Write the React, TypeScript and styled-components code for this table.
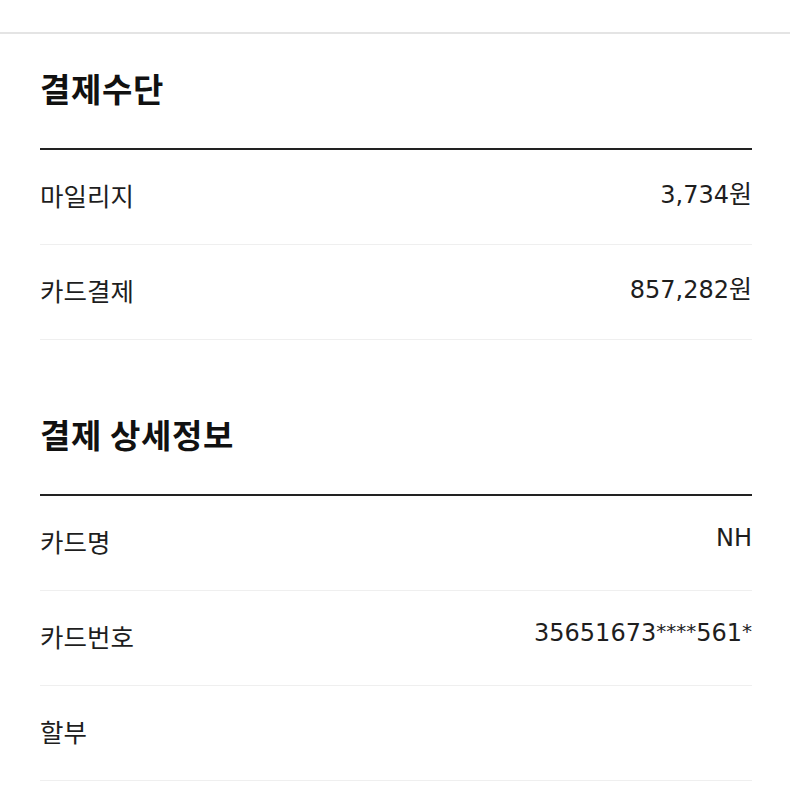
import React from "react";
import styled, { createGlobalStyle } from "styled-components";

const GlobalStyle = createGlobalStyle`
  html, body {
    margin: 0;
    padding: 0;
    background: #ffffff;
  }
  body {
    font-family: "Noto Sans CJK KR", "Noto Sans", sans-serif;
    color: #1a1a1a;
  }
`;

const TopBar = styled.div`
  height: 32px;
  border-bottom: 2px solid #e4e4e4;
`;

const Section = styled.section<{ $gap?: number }>`
  padding: 0 38px 0 40px;
  margin-top: ${(p) => p.$gap || 0}px;
`;

const Title = styled.h2`
  margin: 0;
  height: 108px;
  padding-bottom: 6px;
  display: flex;
  align-items: center;
  font-size: 33px;
  font-weight: 700;
  letter-spacing: 0.6px;
  color: #111;
  border-bottom: 2px solid #222;
  box-sizing: content-box;
`;

const Row = styled.div`
  height: 94px;
  display: flex;
  align-items: center;
  justify-content: space-between;
  border-bottom: 1px solid #efefef;
`;

const Label = styled.span`
  font-size: 25.5px;
  color: #1e1e1e;
  margin-top: -6px;
`;

const Value = styled.span`
  font-family: "DejaVu Sans", "Noto Sans CJK KR", sans-serif;
  font-size: 24px;
  color: #1e1e1e;
  margin-top: -10px;
  letter-spacing: 0;

  .won {
    font-family: "Noto Sans CJK KR", sans-serif;
    font-size: 25px;
  }
  .star {
    font-size: 20px;
    vertical-align: 3px;
  }
`;

type Item = { label: string; value: string; won?: boolean };

const payment: Item[] = [
  { label: "마일리지", value: "3,734", won: true },
  { label: "카드결제", value: "857,282", won: true },
];

const details: Item[] = [
  { label: "카드명", value: "NH" },
  { label: "카드번호", value: "35651673****561*" },
  { label: "할부", value: "" },
];

// asterisks in the masked card number sit high and small, as in the reference font
const renderValue = (v: string) =>
  v.split(/(\*+)/).map((part, i) =>
    part.startsWith("*") ? (
      <span className="star" key={i}>
        {part}
      </span>
    ) : (
      part
    )
  );

const Rows = ({ items }: { items: Item[] }) => (
  <>
    {items.map((it) => (
      <Row key={it.label}>
        <Label>{it.label}</Label>
        <Value>
          {renderValue(it.value)}
          {it.won && <span className="won">원</span>}
        </Value>
      </Row>
    ))}
  </>
);

export default function App() {
  return (
    <>
      <GlobalStyle />
      <TopBar />
      <Section>
        <Title>결제수단</Title>
        <Rows items={payment} />
      </Section>
      <Section $gap={40}>
        <Title>결제 상세정보</Title>
        <Rows items={details} />
      </Section>
    </>
  );
}
